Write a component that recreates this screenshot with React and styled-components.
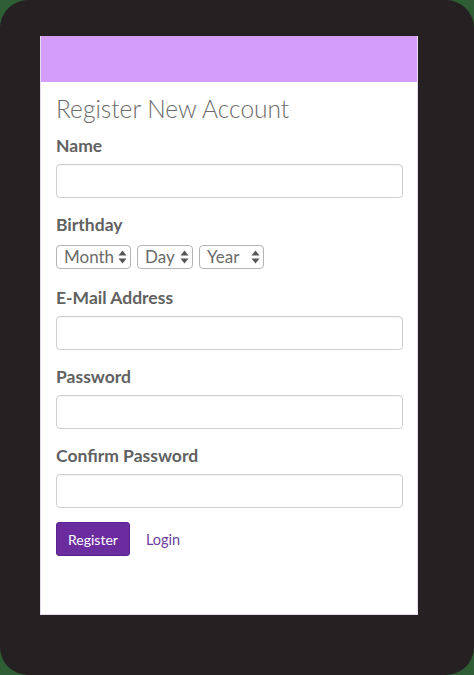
import React from "react";
import styled, { createGlobalStyle } from "styled-components";

const GlobalStyle = createGlobalStyle`
    html, body {
        margin: 0;
        padding: 0;
        background: #3d6b42;
    }
    body {
        font-family: "Lato", "Open Sans", sans-serif;
    }
`;

const Page = styled.div`
    width: 474px;
    height: 675px;
    background-color: #2f5e35;
`;

const Screen = styled.div`
    width: 474px;
    height: 675px;
    background-color: #252122;
    border-radius: 28px;
    box-sizing: border-box;
    padding-top: 36px;
    padding-left: 40px;
`;

const Card = styled.div`
    width: 378px;
    background-color: #fff;
    border: 1px solid #e6dcef;
    border-top: 0;
    box-sizing: border-box;
`;

const CardHeader = styled.div`
    background-color: #d59dfb;
    height: 46px;
`;

const CardBody = styled.form`
    padding: 0 14px 43px 15px;
`;

const Title = styled.h3`
    margin: 14px 0 12px;
    font-size: 24.5px;
    font-weight: 300;
    line-height: 26px;
    color: #6b6b6b;
`;

const FormGroup = styled.div`
    margin-bottom: 15px;
`;

const Label = styled.label`
    display: block;
    margin-bottom: 6px;
    font-size: 17.5px;
    font-weight: 700;
    line-height: 24px;
    color: #616161;
`;

const Input = styled.input`
    display: block;
    width: 100%;
    height: 34px;
    box-sizing: border-box;
    border: 1px solid #cfcfcf;
    border-radius: 4px;
    padding: 6px 12px;
    font-family: inherit;
    font-size: 15px;
    box-shadow: inset 0 1px 1px rgba(0, 0, 0, 0.05);
`;

const SelectRow = styled.div`
    display: flex;
    gap: 6px;
    padding: 2px 0;
`;

const SelectWrap = styled.span`
    position: relative;
    display: inline-block;
    width: ${p => p.w}px;
    height: 24px;
`;

const Select = styled.select`
    appearance: none;
    -webkit-appearance: none;
    width: 100%;
    height: 100%;
    box-sizing: border-box;
    border: 1px solid #b4b4b4;
    border-radius: 4px;
    background: #fff;
    padding: 0 0 0 7px;
    font-family: inherit;
    font-size: 17px;
    color: #6a6a6a;
    line-height: 22px;
`;

const Arrows = styled.svg`
    position: absolute;
    right: 4px;
    top: 5px;
    width: 9px;
    height: 14px;
    pointer-events: none;
`;

const Actions = styled.div`
    display: flex;
    align-items: center;
    gap: 16px;
    margin-top: -1px;
`;

const Button = styled.button`
    height: 34px;
    padding: 0 11px;
    background-color: #6a2c9f;
    border: 1px solid #5b2390;
    border-radius: 3px;
    color: #fff;
    font-family: inherit;
    font-size: 14px;
`;

const LoginLink = styled.a`
    color: #6c3fa0;
    font-size: 14.5px;
    text-decoration: none;
`;

function DateSelect({ w, label }) {
    return (
        <SelectWrap w={w}>
            <Select defaultValue="">
                <option value="">{label}</option>
            </Select>
            <Arrows viewBox="0 0 9 14">
                <path d="M4.5 0.5 L8.5 5.5 L0.5 5.5 Z" fill="#555" />
                <path d="M4.5 13.5 L8.5 8.5 L0.5 8.5 Z" fill="#555" />
            </Arrows>
        </SelectWrap>
    );
}

export default function App() {
    return (
        <Page>
            <GlobalStyle />
            <Screen>
                <Card>
                    <CardHeader />
                    <CardBody onSubmit={e => e.preventDefault()}>
                        <Title>Register New Account</Title>
                        <FormGroup>
                            <Label>Name</Label>
                            <Input type="text" />
                        </FormGroup>
                        <FormGroup>
                            <Label>Birthday</Label>
                            <SelectRow>
                                <DateSelect w={75} label="Month" />
                                <DateSelect w={56} label="Day" />
                                <DateSelect w={65} label="Year" />
                            </SelectRow>
                        </FormGroup>
                        <FormGroup>
                            <Label>E-Mail Address</Label>
                            <Input type="email" />
                        </FormGroup>
                        <FormGroup>
                            <Label>Password</Label>
                            <Input type="password" />
                        </FormGroup>
                        <FormGroup>
                            <Label>Confirm Password</Label>
                            <Input type="password" />
                        </FormGroup>
                        <FormGroup>
                            <Actions>
                                <Button type="submit">Register</Button>
                                <LoginLink href="#">Login</LoginLink>
                            </Actions>
                        </FormGroup>
                    </CardBody>
                </Card>
            </Screen>
        </Page>
    );
}
